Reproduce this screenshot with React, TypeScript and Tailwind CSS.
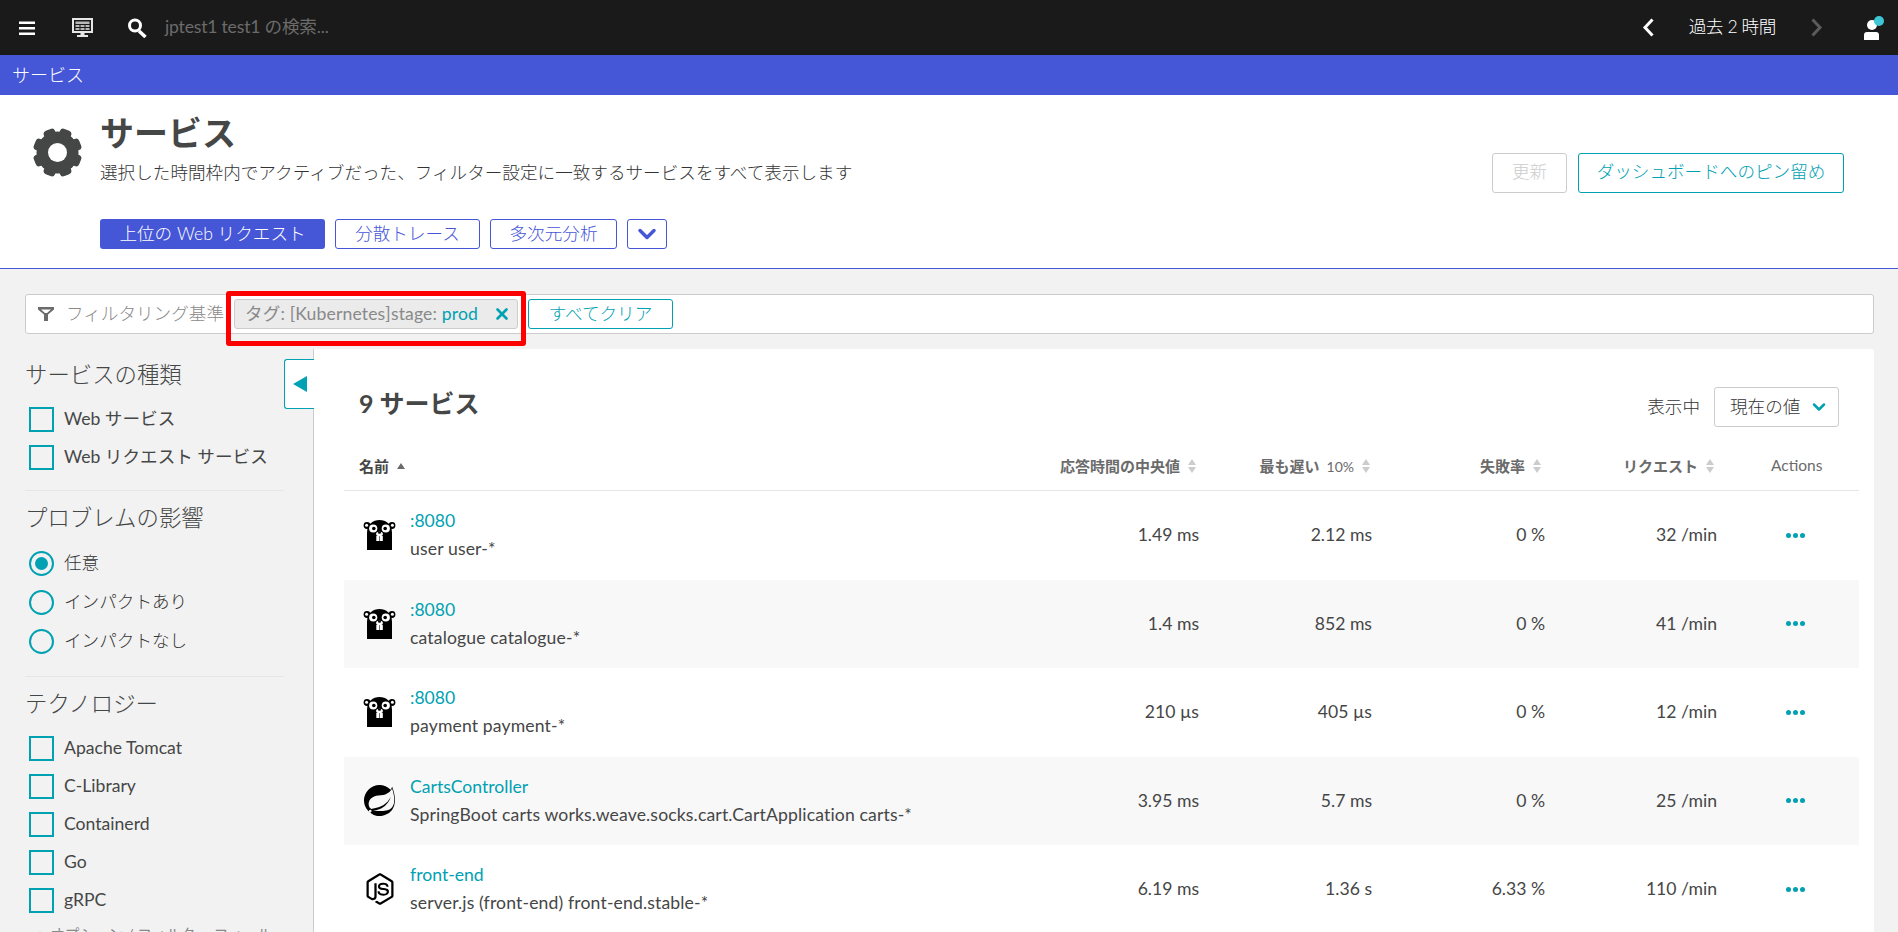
import { ChevronDown, X } from 'lucide-react'
import { SiSpring } from 'react-icons/si'
import { IoLogoNodejs } from 'react-icons/io'

interface Service {
  name: string
  sub: string
  icon: 'go' | 'spring' | 'js'
  median: string
  slowest: string
  failure: string
  requests: string
}

const services: Service[] = [
  { name: ':8080', sub: 'user user-*', icon: 'go', median: '1.49 ms', slowest: '2.12 ms', failure: '0 %', requests: '32 /min' },
  { name: ':8080', sub: 'catalogue catalogue-*', icon: 'go', median: '1.4 ms', slowest: '852 ms', failure: '0 %', requests: '41 /min' },
  { name: ':8080', sub: 'payment payment-*', icon: 'go', median: '210 µs', slowest: '405 µs', failure: '0 %', requests: '12 /min' },
  { name: 'CartsController', sub: 'SpringBoot carts works.weave.socks.cart.CartApplication carts-*', icon: 'spring', median: '3.95 ms', slowest: '5.7 ms', failure: '0 %', requests: '25 /min' },
  { name: 'front-end', sub: 'server.js (front-end) front-end.stable-*', icon: 'js', median: '6.19 ms', slowest: '1.36 s', failure: '6.33 %', requests: '110 /min' },
]

function Gopher() {
  return (
    <svg viewBox="0 0 33 30" className="w-[33px] h-[30px]">
      <circle cx="4" cy="5.5" r="3.4" fill="#000" />
      <circle cx="29" cy="5.5" r="3.4" fill="#000" />
      <circle cx="3.6" cy="5.2" r="1.5" fill="#fff" />
      <circle cx="29.4" cy="5.2" r="1.5" fill="#fff" />
      <path d="M4 30V13C4 4 10 0 16.5 0S29 4 29 13V30Z" fill="#000" />
      <circle cx="10.2" cy="8.5" r="4.1" fill="#fff" />
      <circle cx="22.8" cy="8.5" r="4.1" fill="#fff" />
      <circle cx="10.8" cy="8.5" r="1.8" fill="#000" />
      <circle cx="22.2" cy="8.5" r="1.8" fill="#000" />
      <ellipse cx="16.5" cy="14" rx="3.4" ry="2.2" fill="#fff" />
      <ellipse cx="16.5" cy="12.8" rx="1.6" ry="1" fill="#000" />
      <rect x="13.3" y="16" width="3" height="5" fill="#fff" />
      <rect x="16.8" y="16" width="3" height="5" fill="#fff" />
    </svg>
  )
}

function Gear() {
  return (
    <svg viewBox="0 0 49 49" className="w-[49px] h-[49px] ml-[33px] mt-[33px] shrink-0">
      <circle cx="24.5" cy="24.5" r="21" fill="#454646" />
      {[22.5, 67.5, 112.5, 157.5, 202.5, 247.5, 292.5, 337.5].map(a => (
        <rect key={a} x="18.5" y="0" width="12" height="12" rx="3.5" fill="#454646" transform={`rotate(${a} 24.5 24.5)`} />
      ))}
      <circle cx="24.5" cy="24.5" r="9.5" fill="#fff" />
    </svg>
  )
}

function ServiceIcon({ type }: { type: Service['icon'] }) {
  if (type === 'go') return <Gopher />
  if (type === 'spring') return <SiSpring className="w-[31px] h-[31px] ml-[1px] text-black" />
  return <IoLogoNodejs className="w-[36px] h-[36px] -ml-[1px] text-black" />
}

function Checkbox({ label }: { label: string }) {
  return (
    <label className="flex items-center h-[38px] pl-[4px]">
      <span className="w-[25px] h-[25px] border-2 border-[#00a1b2] shrink-0" />
      <span className="ml-[10px]">{label}</span>
    </label>
  )
}

function Radio({ label, checked }: { label: string; checked?: boolean }) {
  return (
    <label className="flex items-center h-[39px] pl-[4px]">
      <span className="w-[25px] h-[25px] rounded-full border-2 border-[#00a1b2] shrink-0 flex items-center justify-center">
        {checked && <span className="w-[13px] h-[13px] rounded-full bg-[#00a1b2]" />}
      </span>
      <span className="ml-[10px] font-light text-[#333]">{label}</span>
    </label>
  )
}

function SortIcon() {
  return (
    <span className="inline-flex flex-col gap-[2px] ml-[8px]">
      <span className="w-0 h-0 border-x-[4px] border-x-transparent border-b-[6px] border-b-[#ccc]" />
      <span className="w-0 h-0 border-x-[4px] border-x-transparent border-t-[6px] border-t-[#ccc]" />
    </span>
  )
}

function OutlineButton({ children, className }: { children: React.ReactNode; className: string }) {
  return (
    <button className={`h-[30px] border border-[#4556d7] text-[#4556d7] rounded-[3px] flex items-center justify-center font-light ${className}`}>
      {children}
    </button>
  )
}

export default function App() {
  return (
    <div className="h-screen overflow-hidden bg-[#f2f2f2] text-[#454646] text-[17.6px] font-['Lato','Noto_Sans_CJK_JP',sans-serif]">
      {/* Top bar */}
      <header className="h-[55px] bg-[#1a1a1a] flex items-center pl-[19px] pr-[14px]">
        <svg viewBox="0 0 16 15" className="w-[16px] h-[15px] mt-[1px]">
          <path d="M0 0.5h16v2.6H0zM0 6h16v2.6H0zM0 11.5h16v2.6H0z" fill="#fff" />
        </svg>
        <svg viewBox="0 0 21 19" className="w-[21px] h-[19px] ml-[37px]">
          <path fillRule="evenodd" d="M0 0h21v15h-8.5v2H16v2H5v-2h3.5v-2H0zM2 2v11h17V2z" fill="#e6e6e6" />
          <path d="M3.5 3.5h14v2.5h-14zM3.5 7h4v2h-4zM8.5 7h4v2h-4zM13.5 7h4v2h-4zM3.5 10h4v2h-4zM8.5 10h4v2h-4zM13.5 10h4v2h-4z" fill="#b8b8b8" />
        </svg>
        <svg viewBox="0 0 21 20" className="w-[21px] h-[20px] ml-[34px]">
          <circle cx="8" cy="7.5" r="5.5" fill="none" stroke="#fff" strokeWidth="3" />
          <path d="M12 13l6.5 6" stroke="#fff" strokeWidth="3.5" />
        </svg>
        <span className="ml-[17px] text-[#6b6b6b] tracking-[-0.2px]">jptest1 test1 の検索...</span>
        <div className="ml-auto flex items-center">
          <svg viewBox="0 0 12 19" className="w-[12px] h-[19px]">
            <path d="M10.5 1.5L3 9.5l7.5 8" fill="none" stroke="#fff" strokeWidth="3" />
          </svg>
          <span className="ml-[35px] text-white font-light tracking-[-0.4px]">過去 2 時間</span>
          <svg viewBox="0 0 12 19" className="w-[12px] h-[19px] ml-[35px]">
            <path d="M1.5 1.5L9 9.5l-7.5 8" fill="none" stroke="#5c5c5c" strokeWidth="3" />
          </svg>
          <div className="relative w-[20px] h-[24px] ml-[41px] mt-[1px]">
            <span className="absolute left-[3px] top-[4px] w-[10px] h-[10px] rounded-full bg-white" />
            <span className="absolute left-0 bottom-0 w-[15px] h-[8px] bg-white rounded-t-[3px]" />
            <span className="absolute right-0 top-0 w-[10px] h-[10px] rounded-full bg-[#3fc6d6]" />
          </div>
        </div>
      </header>

      {/* Breadcrumb */}
      <div className="h-[40px] bg-[#4556d7] flex items-center px-[12px] text-white text-[18px] font-light">サービス</div>

      {/* Page header */}
      <section className="h-[174px] bg-white border-b border-[#4556d7] flex relative">
        <Gear />
        <div className="ml-[18px] flex flex-col">
          <h1 className="mt-[18px] text-[34px] leading-[40px] font-bold">サービス</h1>
          <p className="mt-[7px] leading-[26px] font-light text-[#333]">選択した時間枠内でアクティブだった、フィルター設定に一致するサービスをすべて表示します</p>
          <div className="mt-[33px] flex gap-[10px]">
            <button className="w-[225px] h-[30px] bg-[#4556d7] text-white rounded-[3px] font-light">上位の Web リクエスト</button>
            <OutlineButton className="w-[145px]">分散トレース</OutlineButton>
            <OutlineButton className="w-[127px]">多次元分析</OutlineButton>
            <OutlineButton className="w-[40px]"><ChevronDown className="w-[28px] h-[28px]" strokeWidth={3} /></OutlineButton>
          </div>
        </div>
        <div className="ml-auto mr-[54px] mt-[58px] flex gap-[11px]">
          <button className="w-[75px] h-[40px] pb-[2px] border border-[#cccccc] text-[#cccccc] rounded-[3px] font-light">更新</button>
          <button className="w-[266px] h-[40px] pb-[2px] border border-[#00a1b2] text-[#00a1b2] rounded-[3px] font-light">ダッシュボードへのピン留め</button>
        </div>
      </section>

      {/* Filter bar */}
      <div className="mt-[25px] mx-[25px] w-[1849px] h-[40px] bg-white border border-[#cccccc] rounded-[3px] flex items-center pl-[12px] relative">
        <svg viewBox="0 0 16 14" className="w-[16px] h-[14px]">
          <path d="M0 0h16v2.5L10 7.5V14H6V7.5L0 2.5zM3 2.5l4 3.5h2l4-3.5z" fillRule="evenodd" fill="#6b6b6b" />
        </svg>
        <span className="ml-[12px] text-[#898989] font-light">フィルタリング基準</span>
        <div className="ml-[10px] w-[284px] h-[30px] bg-[#ebebeb] border border-[#cccccc] rounded-[3px] flex items-center pl-[10px] whitespace-nowrap tracking-[0.14px]">
          <span className="text-[#898989]">タグ: [Kubernetes]stage:&nbsp;</span>
          <span className="text-[#00a1b2]">prod</span>
          <X className="ml-auto mr-[6px] w-[18px] h-[18px] text-[#00a1b2]" strokeWidth={3.5} />
        </div>
        <button className="ml-[10px] w-[145px] h-[30px] border border-[#00a1b2] text-[#00a1b2] rounded-[3px] bg-white font-light">すべてクリア</button>
        {/* red annotation round the filter chip */}
        <div className="absolute left-[200px] top-[-4px] w-[300px] h-[55px] border-[5px] border-[#ff0000] rounded-[3px]" />
      </div>

      <div className="mt-[15px] flex">
        {/* Sidebar */}
        <aside className="w-[314px] h-[583px] shrink-0 border-r border-[#cccccc] pl-[25px] pr-[29px] relative">
          <button className="absolute right-[-1px] top-[10px] w-[30px] h-[50px] bg-white border border-r-0 border-[#00a1b2] rounded-l-[3px] flex items-center justify-center">
            <span className="w-0 h-0 border-y-[8px] border-y-transparent border-r-[14px] border-r-[#00a1b2]" />
          </button>
          <h3 className="mt-[11px] text-[22.4px] leading-[30px] font-light">サービスの種類</h3>
          <div className="mt-[10px]">
            <Checkbox label="Web サービス" />
            <Checkbox label="Web リクエスト サービス" />
          </div>
          <hr className="mt-[14px] border-[#e6e6e6]" />
          <h3 className="mt-[12px] text-[22.4px] leading-[30px] font-light">プロブレムの影響</h3>
          <div className="mt-[11px]">
            <Radio label="任意" checked />
            <Radio label="インパクトあり" />
            <Radio label="インパクトなし" />
          </div>
          <hr className="mt-[15px] border-[#e6e6e6]" />
          <h3 className="mt-[12px] text-[22.4px] leading-[30px] font-light">テクノロジー</h3>
          <div className="mt-[10px]">
            <Checkbox label="Apache Tomcat" />
            <Checkbox label="C-Library" />
            <Checkbox label="Containerd" />
            <Checkbox label="Go" />
            <Checkbox label="gRPC" />
          </div>
          <p className="mt-[5px] text-[14.6px] leading-[22px] text-[#898989] whitespace-nowrap pl-[13px]">&gt; オプション / フィルター フィール</p>
        </aside>

        {/* Services panel */}
        <main className="w-[1560px] h-[583px] bg-white rounded-tr-[3px] px-[30px] pr-[15px]">
          <div className="flex items-center h-[80px] pt-[29px] pl-[15px] pr-[20px]">
            <h2 className="text-[25px] font-bold">9 サービス</h2>
            <span className="ml-auto mt-[8px] font-light text-[#333]">表示中</span>
            <div className="ml-[14px] mt-[7px] w-[125px] h-[40px] border border-[#cccccc] rounded-[3px] flex items-center pl-[15px] font-light text-[#333]">
              現在の値
              <ChevronDown className="ml-[9px] w-[20px] h-[20px] text-[#00a1b2]" strokeWidth={3} />
            </div>
          </div>
          <div className="mt-[22px] h-[40px] border-b border-[#e6e6e6] grid grid-cols-[682px_173px_173px_173px_172px_1fr] items-center pb-[9px] text-[15px] font-bold text-[#6b6b6b]">
            <span className="pl-[15px] flex items-center text-[#454646]">
              名前
              <span className="ml-[8px] w-0 h-0 border-x-[4px] border-x-transparent border-b-[6px] border-b-[#6b6b6b]" />
            </span>
            <span className="flex items-center justify-end pr-[3px]">応答時間の中央値<SortIcon /></span>
            <span className="flex items-center justify-end pr-[2px]">最も遅い<span className="ml-[7px] font-normal text-[14px]">10%</span><SortIcon /></span>
            <span className="flex items-center justify-end pr-[4px]">失敗率<SortIcon /></span>
            <span className="flex items-center justify-end pr-[3px]">リクエスト<SortIcon /></span>
            <span className="pl-[54px] font-normal text-[15.5px] text-[#6b6b6b]">Actions</span>
          </div>
          {services.map((s, i) => (
            <div
              key={i}
              className={`h-[88.5px] grid grid-cols-[682px_173px_173px_173px_172px_1fr] items-center ${i % 2 === 1 ? 'bg-[#f8f8f8]' : ''}`}
            >
              <div className="flex items-center">
                <div className="w-[66px] pl-[19px] shrink-0"><ServiceIcon type={s.icon} /></div>
                <div className="leading-[28px]">
                  <div className="text-[#00a1b2]">{s.name}</div>
                  <div className="tracking-[0.14px]">{s.sub}</div>
                </div>
              </div>
              <span className="text-right">{s.median}</span>
              <span className="text-right">{s.slowest}</span>
              <span className="text-right">{s.failure}</span>
              <span className="text-right">{s.requests}</span>
              <span className="pl-[69px] flex gap-[2px]">
                <span className="w-[5px] h-[5px] rounded-full bg-[#00a1b2]" />
                <span className="w-[5px] h-[5px] rounded-full bg-[#00a1b2]" />
                <span className="w-[5px] h-[5px] rounded-full bg-[#00a1b2]" />
              </span>
            </div>
          ))}
        </main>
      </div>
    </div>
  )
}
